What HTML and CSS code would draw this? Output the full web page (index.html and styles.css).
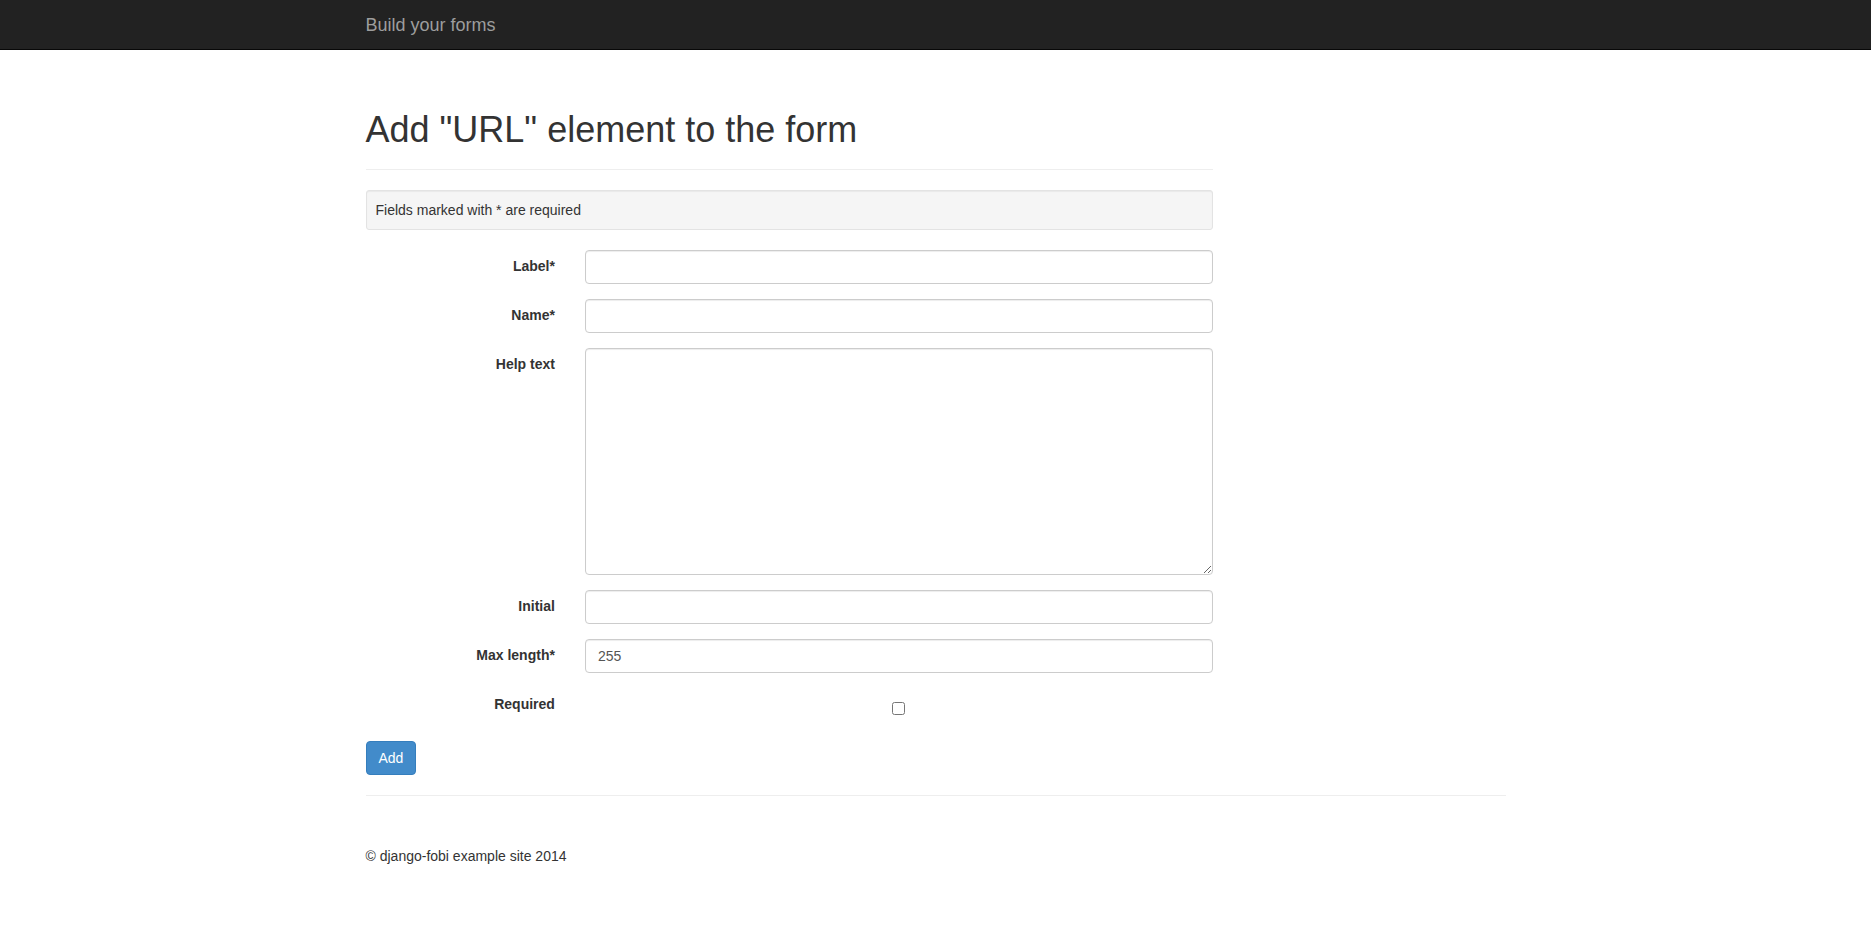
FILE: index.html
```html
<!DOCTYPE html>
<html lang="en">
<head>
<meta charset="utf-8">
<title>Build your forms</title>
<link rel="stylesheet" href="styles.css">
</head>
<body>
<nav class="navbar">
  <div class="container">
    <a class="brand" href="#">Build your forms</a>
  </div>
</nav>
<main class="container main">
  <div class="content-col">
    <div class="page-header">
      <h1>Add "URL" element to the form</h1>
    </div>
    <form class="form-area">
      <div class="well">Fields marked with * are required</div>
      <div class="field-row">
        <label class="control-label" for="f-label">Label*</label>
        <input class="form-control" id="f-label" type="text">
      </div>
      <div class="field-row">
        <label class="control-label" for="f-name">Name*</label>
        <input class="form-control" id="f-name" type="text">
      </div>
      <div class="field-row">
        <label class="control-label" for="f-help">Help text</label>
        <textarea class="form-control textarea" id="f-help"></textarea>
      </div>
      <div class="field-row">
        <label class="control-label" for="f-initial">Initial</label>
        <input class="form-control" id="f-initial" type="text">
      </div>
      <div class="field-row">
        <label class="control-label" for="f-max">Max length*</label>
        <input class="form-control" id="f-max" type="text" value="255">
      </div>
      <div class="field-row">
        <label class="control-label" for="f-req">Required</label>
        <div class="check-wrap"><input class="checkbox" id="f-req" type="checkbox"></div>
      </div>
      <div class="actions">
        <button class="btn" type="button">Add</button>
      </div>
    </form>
  </div>
  <hr class="rule">
  <footer class="footer">
    <p>&copy; django-fobi example site 2014</p>
  </footer>
</main>
</body>
</html>
```

FILE: styles.css
```css
* { box-sizing: border-box; }
html, body { margin: 0; padding: 0; }
body {
  font-family: "Liberation Sans", Arial, Helvetica, sans-serif;
  font-size: 14px;
  line-height: 20px;
  color: #333;
  background: #fff;
}
.container {
  width: 1170px;
  margin: 0 auto;
  padding: 0 15px;
}
.navbar {
  background: #222;
  height: 50px;
  border-bottom: 1px solid #080808;
}
.brand {
  display: inline-block;
  padding: 15px 0;
  font-size: 18px;
  line-height: 20px;
  color: #9d9d9d;
  text-decoration: none;
}
.main { padding-top: 60px; }
.content-col { width: 847.5px; }
.page-header {
  padding-bottom: 9px;
  border-bottom: 1px solid #eee;
  margin-bottom: 20px;
}
.page-header h1 {
  margin: 0 0 10px;
  font-size: 36px;
  font-weight: 500;
  line-height: 39.6px;
  color: #333;
}
.well {
  background: #f5f5f5;
  border: 1px solid #e3e3e3;
  border-radius: 3px;
  box-shadow: inset 0 1px 1px rgba(0,0,0,.05);
  padding: 9px;
  margin-bottom: 20px;
}
.field-row {
  display: grid;
  grid-template-columns: 189.4px 1fr;
  column-gap: 30px;
  margin-bottom: 15px;
}
.control-label {
  text-align: right;
  font-weight: bold;
  padding-top: 6px;
}
.form-control {
  display: block;
  width: 100%;
  height: 34px;
  padding: 6px 12px;
  font-family: inherit;
  font-size: 14px;
  line-height: 20px;
  color: #555;
  background: #fff;
  border: 1px solid #ccc;
  border-radius: 4px;
  box-shadow: inset 0 1px 1px rgba(0,0,0,.075);
  margin: 0;
}
.textarea {
  height: 227px;
  resize: vertical;
}
.check-wrap {
  height: 34px;
  margin-top: 4px;
  display: flex;
  align-items: center;
  justify-content: center;
}
.checkbox {
  width: 13px;
  height: 13px;
  margin: 0;
}
.btn {
  display: inline-block;
  height: 34px;
  padding: 6px 12px;
  font-family: inherit;
  font-size: 14px;
  line-height: 20px;
  color: #fff;
  background: #428bca;
  border: 1px solid #357ebd;
  border-radius: 4px;
  cursor: pointer;
}
.rule {
  margin: 20px 0 0;
  border: 0;
  border-top: 1px solid #eee;
  height: 0;
}
.footer { padding-top: 50px; }
.footer p { margin: 0 0 10px; }
```
